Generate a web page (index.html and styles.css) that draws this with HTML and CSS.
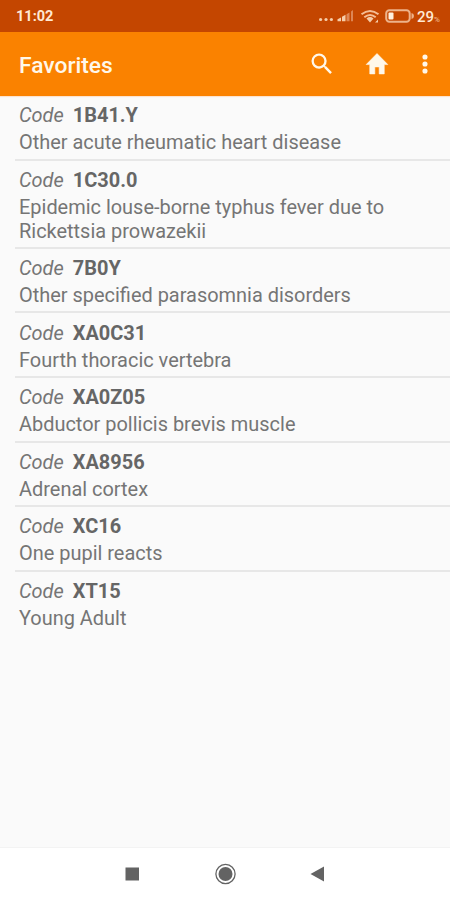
FILE: index.html
```html
<!DOCTYPE html>
<html lang="en">
<head>
<meta charset="utf-8">
<title>Favorites</title>
<link rel="stylesheet" href="styles.css">
</head>
<body>
<div class="screen">
  <div class="status">
    <span class="time">11:02</span>
    <svg class="status-icons" width="97" height="20" viewBox="0 0 97 20">
      <g fill="#f6cda9"><circle cx="2.6" cy="12.5" r="1.6"/><circle cx="8" cy="12.5" r="1.6"/><circle cx="13.4" cy="12.5" r="1.6"/>
      <path d="M19.500 14.200v-2l3.500-1.800v3.800zM24 14.200v-4.500l3.500-2v6.500z"/></g>
      <path d="M28.500 14.200V7.300l3-1.800v8.700zM33 14.200V4.500l2-1.500v11.200z" fill="#dd8655"/>
      <g fill="none" stroke="#f4be96" stroke-width="2"><path d="M43.500 7.300Q52 .7 60.500 7.300"/><path d="M46.300 10.300Q52 5.700 57.700 10.300"/></g>
      <path d="M48.500 11.500Q52 8.700 55.500 11.500L52 15.500zM57 15.500l3-3v3z" fill="#f6cda9"/>
      <rect x="68.200" y="3.200" width="23.500" height="11.600" rx="3.200" fill="none" stroke="#edb38b" stroke-width="2"/>
      <rect x="70.500" y="5.400" width="5" height="7.200" rx="1" fill="#fff0df"/>
      <path d="M93.500 6q2.500 .5 2.500 3t-2.500 3z" fill="#edb38b"/>
    </svg>
    <span class="battery">29<small>%</small></span>
  </div>
  <div class="toolbar">
    <h1>Favorites</h1>
    <svg class="search" width="28" height="28" viewBox="0 0 24 24"><path d="M15.500 14h-.79l-.28-.27A6.471 6.471 0 0 0 16 9.500 6.500 6.500 0 1 0 9.500 16c1.610 0 3.090-.59 4.230-1.570l.27.28v.79l5 4.990L20.490 19l-4.990-5zm-6 0C7.010 14 5 11.990 5 9.500S7.010 5 9.500 5 14 7.010 14 9.500 11.990 14 9.500 14z"/></svg>
    <svg class="home" width="26" height="28" viewBox="0 0 24 24" preserveAspectRatio="none"><path d="M10 20.500v-6h4v6h4.700v-8h3.300L12 3 2 12.500h3.300v8z" stroke="#fff8ea" stroke-width=".5" stroke-linejoin="round"/></svg>
    <svg class="more" width="28" height="28" viewBox="0 0 24 24"><circle cx="12" cy="6" r="2.200"/><circle cx="12" cy="12" r="2.200"/><circle cx="12" cy="18" r="2.200"/></svg>
  </div>
  <ul class="list">
    <li><div class="code"><i>Code</i><b>1B41.Y</b></div><p>Other acute rheumatic heart disease</p></li>
    <li><div class="code"><i>Code</i><b>1C30.0</b></div><p>Epidemic louse-borne typhus fever due to Rickettsia prowazekii</p></li>
    <li><div class="code"><i>Code</i><b>7B0Y</b></div><p>Other specified parasomnia disorders</p></li>
    <li><div class="code"><i>Code</i><b>XA0C31</b></div><p>Fourth thoracic vertebra</p></li>
    <li><div class="code"><i>Code</i><b>XA0Z05</b></div><p>Abductor pollicis brevis muscle</p></li>
    <li><div class="code"><i>Code</i><b>XA8956</b></div><p>Adrenal cortex</p></li>
    <li><div class="code"><i>Code</i><b>XC16</b></div><p>One pupil reacts</p></li>
    <li><div class="code"><i>Code</i><b>XT15</b></div><p>Young Adult</p></li>
  </ul>
  <div class="nav">
    <svg width="24" height="24" viewBox="0 0 24 24"><rect x="5.500" y="5.500" width="13.500" height="13" fill="#636363"/></svg>
    <svg width="24" height="24" viewBox="0 0 24 24"><circle cx="12.500" cy="12" r="9.600" fill="none" stroke="#636363" stroke-width="1.300"/><circle cx="12.500" cy="12" r="7" fill="#636363"/></svg>
    <svg width="24" height="24" viewBox="0 0 24 24"><path d="M3.500 12L17 4.500v15z" fill="#636363"/></svg>
  </div>
</div>
</body>
</html>
```
FILE: styles.css
```css
* { box-sizing: border-box; }
body { margin: 0; font-family: Roboto, sans-serif; }
.screen { width: 450px; height: 900px; display: flex; flex-direction: column; background: #fafafa; overflow: hidden; }
.status { height: 32px; flex: none; display: flex; align-items: center; background: #c44600; color: #ffe9d3; padding: 0 11px 0 16px; }
.time { font-size: 14.5px; font-weight: 700; flex: 1; padding-top: 1px; }
.status-icons { margin: 1px 2px 0 0; }
.battery { font-size: 15px; font-weight: 500; width: 22px; white-space: nowrap; margin-top: 1px; }
.battery small { font-size: 8px; color: #edb38b; }
.toolbar { height: 64px; flex: none; display: flex; align-items: center; background: #fa8200; color: #fff8ea; padding: 0 11px 0 19px; box-shadow: 0 1px 1px #fbe3d0; }
.toolbar h1 { margin: 2px 0 0; flex: 1; font-size: 22.8px; font-weight: 500; }
.toolbar svg { fill: #fff8ea; flex: none; }
.search { margin-right: 28px; }
.home { margin-right: 21.5px; }
.list { list-style: none; margin: 0; padding: 0 0 0 15px; flex: 1; color: #757575; font-size: 19.95px; line-height: 23.8px; }
.list li { padding: 8.2px 30px 3.6px 4px; border-bottom: 2px solid #e7e7e7; }
.list li:last-child { border-bottom: 0; }
.code { display: flex; gap: 9px; margin-bottom: 3.2px; }
.code b { color: #666; font-weight: 700; }
.list p { margin: 0; }
.nav { height: 53px; flex: none; background: #fff; display: flex; justify-content: center; align-items: center; gap: 69.5px; border-top: 1px solid #f3f3f3; padding-bottom: 1px; }
```
